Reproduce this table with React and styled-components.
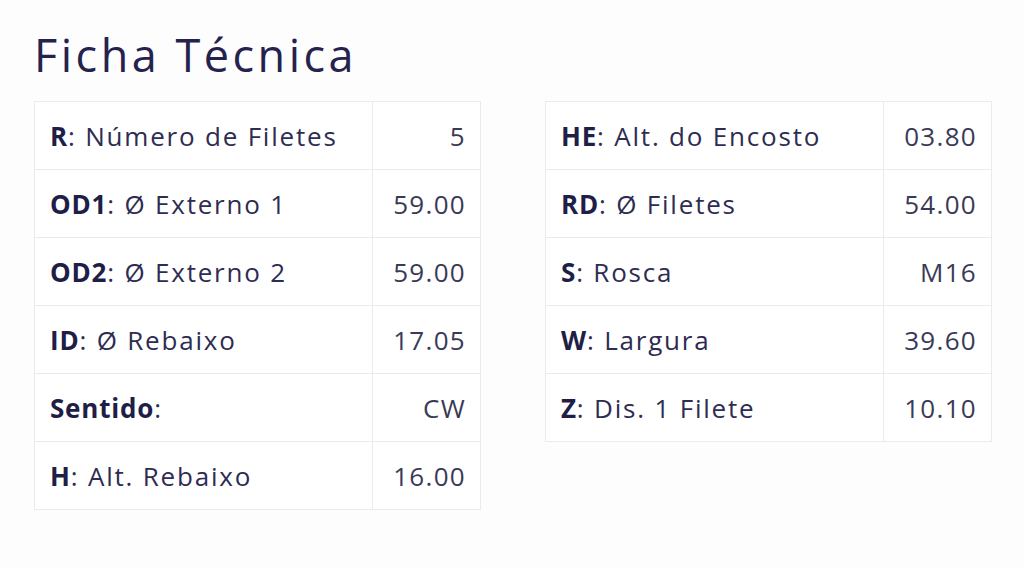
import React from 'react'
import styled, { createGlobalStyle } from 'styled-components'

const GlobalStyle = createGlobalStyle`
  html, body {
    margin: 0;
    padding: 0;
    background: #fdfdfd;
  }
  body {
    font-family: 'Open Sans', 'DejaVu Sans', sans-serif;
    color: #2a2850;
  }
`

const Page = styled.main`
  padding: 26px 32px 0 34px;
`

const Title = styled.h1`
  margin: 0 0 17px 0;
  font-size: 45px;
  font-weight: 400;
  line-height: 58px;
  letter-spacing: 3.5px;
  color: #25234d;
`

const Columns = styled.div`
  display: grid;
  grid-template-columns: 447px 447px;
  column-gap: 64px;
  align-items: start;
`

const Table = styled.table`
  width: 100%;
  border-collapse: collapse;
  background: #ffffff;
`

const Row = styled.tr`
  height: 68px;
`

const Cell = styled.td`
  border: 1px solid #ebebef;
  padding: 0 15px;
  font-size: 26px;
  letter-spacing: 1.8px;
  white-space: nowrap;
`

const LabelCell = styled(Cell)`
  color: #2e2c52;
`

const ValueCell = styled(Cell)`
  width: 78px;
  text-align: right;
  color: #3a3a56;
  letter-spacing: 1.3px;
  padding-right: 14px;
`

const Code = styled.strong`
  font-weight: 700;
  color: #201e47;
  letter-spacing: 0.8px;
`

const left = [
  ['R', 'Número de Filetes', '5'],
  ['OD1', 'Ø Externo 1', '59.00'],
  ['OD2', 'Ø Externo 2', '59.00'],
  ['ID', 'Ø Rebaixo', '17.05'],
  ['Sentido', '', 'CW'],
  ['H', 'Alt. Rebaixo', '16.00'],
]

const right = [
  ['HE', 'Alt. do Encosto', '03.80'],
  ['RD', 'Ø Filetes', '54.00'],
  ['S', 'Rosca', 'M16'],
  ['W', 'Largura', '39.60'],
  ['Z', 'Dis. 1 Filete', '10.10'],
]

const SpecTable = ({ rows }) => (
  <Table>
    <tbody>
      {rows.map(([code, label, value]) => (
        <Row key={code}>
          <LabelCell>
            <Code>{code}</Code>:{label ? ` ${label}` : ''}
          </LabelCell>
          <ValueCell>{value}</ValueCell>
        </Row>
      ))}
    </tbody>
  </Table>
)

const App = () => (
  <>
    <GlobalStyle />
    <Page>
      <Title>Ficha Técnica</Title>
      <Columns>
        <SpecTable rows={left} />
        <SpecTable rows={right} />
      </Columns>
    </Page>
  </>
)

export default App
